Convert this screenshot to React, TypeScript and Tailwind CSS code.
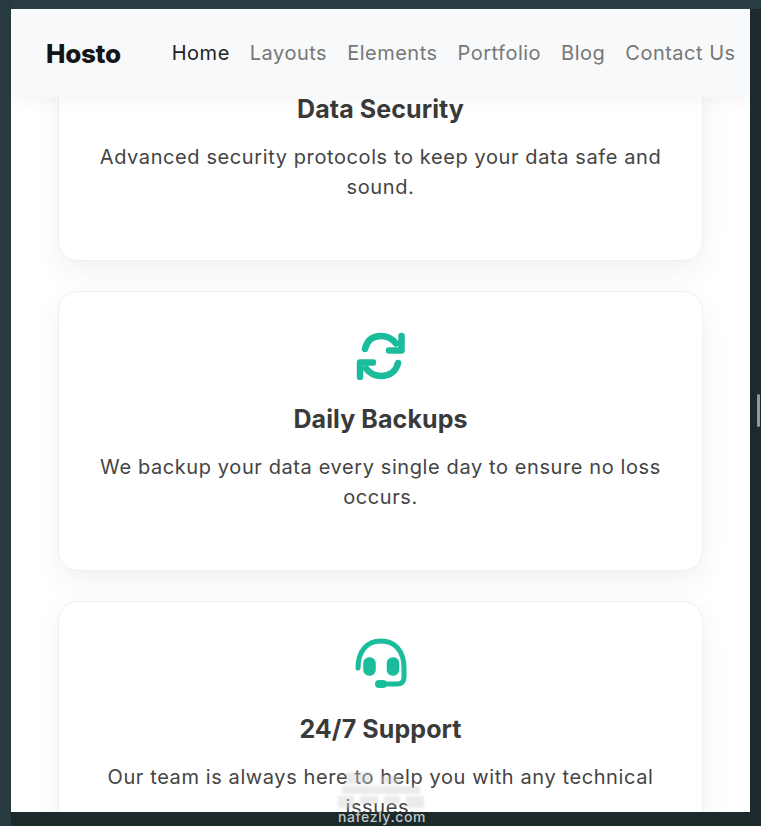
import React from "react";

const links = ["Layouts", "Elements", "Portfolio", "Blog", "Contact Us"];

function RefreshIcon() {
  return (
    <svg width="52" height="52" viewBox="0 0 52 52" fill="none" stroke="#1abc9c" strokeWidth="6.5" strokeLinecap="round" strokeLinejoin="round">
      <path d="M10 21 C12 12 18 8 26 8 C32.500 8 37.500 11 41 15.500" />
      <path d="M46.500 8 V22.500 H34" />
      <path d="M43 35 C41 44 34 48 26 48 C19.500 48 14.500 45 11 40.500" />
      <path d="M5 49 V34.500 H18" />
    </svg>
  );
}

function HeadsetIcon() {
  return (
    <svg width="54" height="52" viewBox="0 0 54 52" fill="none" stroke="#1abc9c" strokeWidth="5" strokeLinecap="round" strokeLinejoin="round">
      <path d="M4 30 C4 13 13 3 27 3 C41 3 50 13 50 30 V39 C50 44 47 46 43 46 H28" />
      <rect x="10" y="20" width="11" height="17" rx="5" fill="#1abc9c" stroke="#1abc9c" strokeWidth="1.500" />
      <rect x="33.500" y="20" width="11" height="17" rx="5" fill="#1abc9c" stroke="#1abc9c" strokeWidth="1.500" />
      <rect x="22" y="43" width="10" height="6" rx="3" fill="#1abc9c" stroke="#1abc9c" strokeWidth="2" />
    </svg>
  );
}

function WatermarkLogo() {
  return (
    <svg width="90" height="44" viewBox="0 0 90 44" fill="#cfcfcf" opacity="0.4" className="blur-[1px]">
      <rect x="10" y="6" width="26" height="12" />
      <rect x="44" y="10" width="20" height="8" />
      <rect x="6" y="20" width="78" height="8" />
      <rect x="2" y="30" width="16" height="12" />
      <rect x="24" y="30" width="18" height="8" />
      <rect x="48" y="30" width="16" height="8" />
      <rect x="70" y="30" width="18" height="12" />
    </svg>
  );
}

function Card({ icon, title, lines }: { icon?: React.ReactNode; title: string; lines: string[] }) {
  return (
    <div className="h-[280px] shrink-0 rounded-[20px] border border-[#f0f0f0] bg-white pt-[36px] text-center shadow-[0_10px_30px_rgba(0,0,0,0.06)]">
      <div className="flex h-[52px] items-center justify-center">{icon}</div>
      <h3 className="mt-[21px] text-[25px] font-bold leading-[36px] tracking-[0.1px] text-[#3a3a3a]">{title}</h3>
      <p className="mt-[15px] text-[20px] leading-[30px] tracking-[0.6px] text-[#444444]">
        {lines.map((l) => (
          <span key={l} className="block">{l}</span>
        ))}
      </p>
    </div>
  );
}

export default function App() {
  return (
    <div className="relative h-[826px] w-[761px] overflow-hidden bg-[#1c2a2c] font-['Inter','Liberation_Sans',sans-serif]">
      <div className="absolute inset-x-0 top-0 h-[9px] bg-[#283c42]" />
      <div className="absolute inset-y-0 left-0 w-[11px] bg-[#263a40]" />
      <div className="absolute right-[1px] top-[394px] h-[33px] w-[3px] rounded-sm bg-[#8f9a9b]" />

      <div className="absolute left-[11px] top-[9px] h-[803px] w-[739px] overflow-hidden bg-white">
        <header className="absolute inset-x-0 top-0 z-10 flex h-[88px] items-center bg-[#f8f9fb] pl-[35px] shadow-[0_5px_15px_rgba(0,0,0,0.04)]">
          <span className="text-[26px] font-extrabold tracking-[-0.3px] text-[#151515]">Hosto</span>
          <nav className="ml-[51px] flex gap-[20px] text-[20px] tracking-[0.5px] text-[#777777]">
            <a className="text-[#222222]">Home</a>
            {links.map((l) => (
              <a key={l}>{l}</a>
            ))}
          </nav>
        </header>

        <div className="-mt-[28px] flex flex-col gap-[30px] px-[47px]">
          <Card title="Data Security" lines={["Advanced security protocols to keep your data safe and", "sound."]} />
          <Card icon={<RefreshIcon />} title="Daily Backups" lines={["We backup your data every single day to ensure no loss", "occurs."]} />
          <Card icon={<HeadsetIcon />} title="24/7 Support" lines={["Our team is always here to help you with any technical", "issues."]} />
        </div>
      </div>

      <div className="absolute left-[336px] top-[766px]">
        <WatermarkLogo />
      </div>
      <span className="absolute left-[338px] top-[808px] text-[14px] font-medium leading-[18px] tracking-[0.6px] text-[#c4c9c9]">nafezly.com</span>
    </div>
  );
}
